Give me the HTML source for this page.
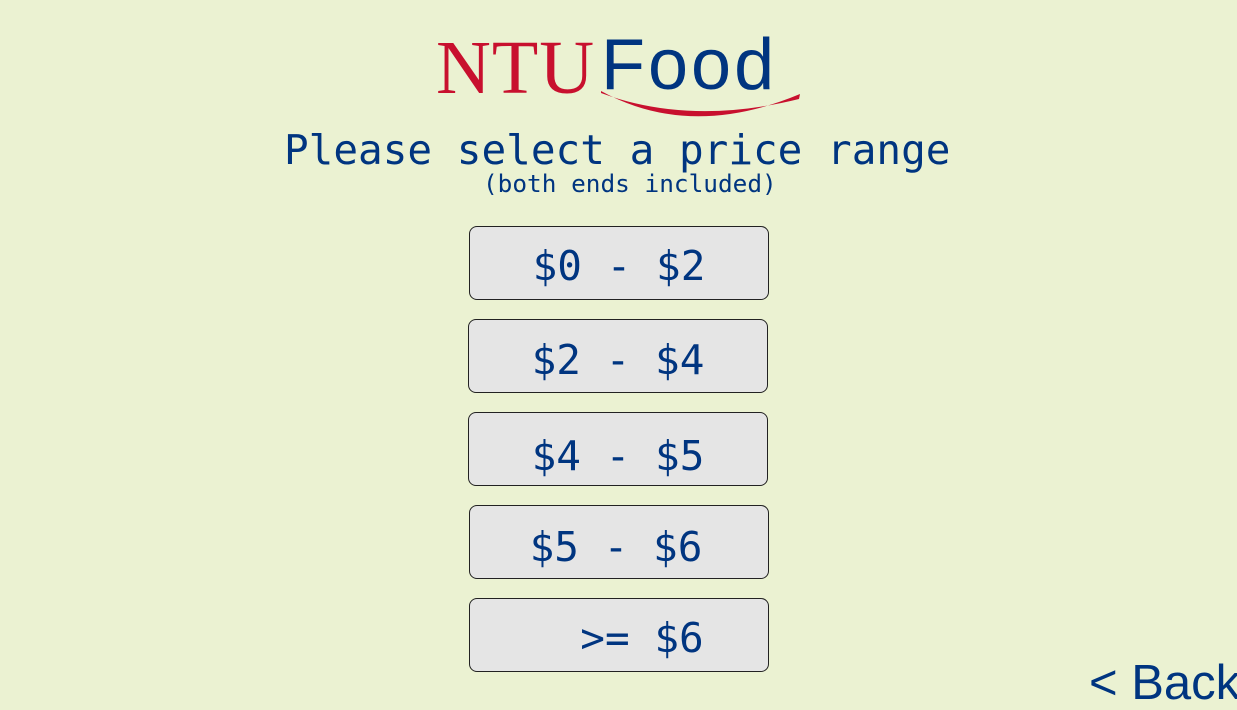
<!DOCTYPE html>
<html><head><meta charset="utf-8"><style>
html,body{margin:0;padding:0;}
body{width:1237px;height:700px;background:#ebf2d2;position:relative;overflow:hidden;color:#003580;}
.a{position:absolute;white-space:pre;line-height:1;}
.m{font-family:"DejaVu Sans Mono",monospace;}
.btn{position:absolute;width:298px;height:72px;background:#e5e5e5;border:1px solid #222;border-radius:8px;}
.bt{position:absolute;left:0;width:100%;text-align:center;top:19px;font-family:"DejaVu Sans Mono",monospace;font-size:41px;line-height:41px;color:#003580;white-space:pre;}
</style></head><body>
<div class="a" style="left:436px;top:30px;font-family:'Liberation Serif',serif;font-size:76px;color:#c8102e;letter-spacing:1px;">NTU</div>
<div class="a" style="left:601px;top:29px;font-family:'Liberation Sans',sans-serif;font-size:72px;color:#003580;letter-spacing:3px;">Food</div>
<svg class="a" style="left:0;top:0" width="1237" height="140"><path d="M601 91 Q690 140 800 94 L799 99 Q690 126 601 93Z" fill="#c8102e"/></svg>
<div class="a m" style="left:284px;top:130px;font-size:41px;">Please select a price range</div>
<div class="a m" style="left:483px;top:172px;font-size:24.4px;">(both ends included)</div>
<div class="btn" style="left:469px;top:226px;"><div class="bt">$0 - $2</div></div>
<div class="btn" style="left:468px;top:319px;"><div class="bt" style="top:20px">$2 - $4</div></div>
<div class="btn" style="left:468px;top:412px;"><div class="bt" style="top:23px">$4 - $5</div></div>
<div class="btn" style="left:469px;top:505px;"><div class="bt" style="top:21px;left:-3px">$5 - $6</div></div>
<div class="btn" style="left:469px;top:598px;"><div class="bt" style="top:19px;left:23px">&gt;= $6</div></div>
<div class="a" style="left:1089px;top:659px;font-family:'Liberation Sans',sans-serif;font-size:49px;">&lt; Back</div>
</body></html>
